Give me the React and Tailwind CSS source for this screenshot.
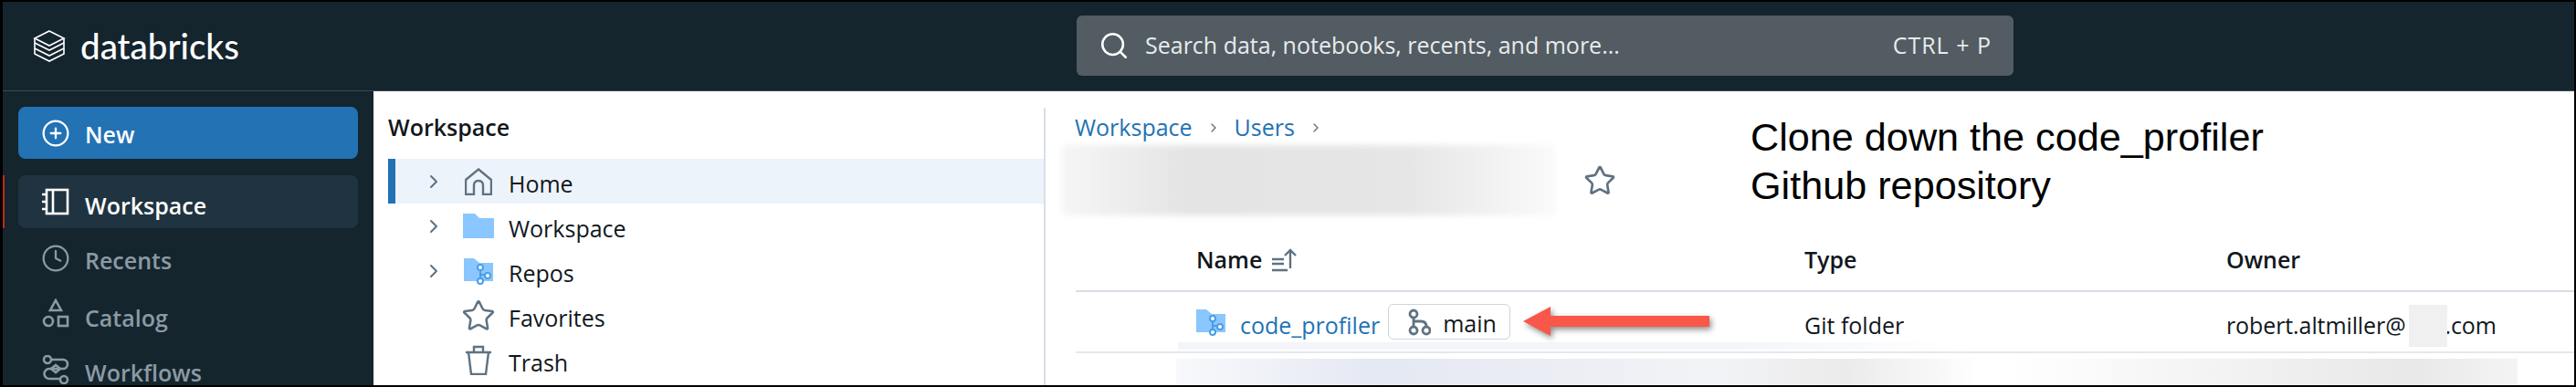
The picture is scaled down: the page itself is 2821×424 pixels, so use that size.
import { ChevronRight, Star, Clock, Search, CirclePlus } from "lucide-react";

const FONT = "font-['Open_Sans','Noto_Sans',sans-serif]";

function Logo() {
  return (
    <svg width="36" height="38" viewBox="0 0 36 38" fill="none" stroke="#fff" strokeWidth="1.6">
      <path d="M18 2 L34 10 L18 18 L2 10 Z" />
      <path d="M2 10 V15 L18 23 L34 15 V10" />
      <path d="M2 15 V21 L18 29 L34 21 V15" />
      <path d="M2 21 V27 L18 35 L34 27 V21" />
    </svg>
  );
}

function BookIcon() {
  return (
    <svg width="30" height="30" viewBox="0 0 30 30" fill="none" stroke="#fff" strokeWidth="2.6">
      <rect x="5" y="2" width="23" height="26" />
      <path d="M12 2 V28" />
      <path d="M0 7 H5 M0 15 H5 M0 23 H5" />
    </svg>
  );
}

function CatalogIcon() {
  return (
    <svg width="30" height="32" viewBox="0 0 30 32" fill="none" stroke="#8c9aa3" strokeWidth="2.6">
      <path d="M15 2 L21 13 H9 Z" />
      <circle cx="7" cy="25" r="5" />
      <rect x="18" y="20" width="10" height="10" />
    </svg>
  );
}

function WorkflowIcon() {
  return (
    <svg width="30" height="32" viewBox="0 0 30 32" fill="none" stroke="#8c9aa3" strokeWidth="2.6">
      <circle cx="6" cy="5" r="4" />
      <circle cx="24" cy="27" r="4" />
      <path d="M10 5 H23 A5 5 0 0 1 23 15 H8 A5 5 0 0 0 8 26 H20" />
      <path d="M15 11 L20 15 L15 19 L10 15 Z" />
    </svg>
  );
}

function HomeIcon() {
  return (
    <svg width="30" height="30" viewBox="0 0 30 30" fill="none" stroke="#5f7281" strokeWidth="2.4">
      <path d="M15 1.5 L29 13 V29 H20 V19 Q20 14 15 14 Q10 14 10 19 V29 H1 V13 Z" />
    </svg>
  );
}

function TrashIcon() {
  return (
    <svg width="28" height="33" viewBox="0 0 28 33" fill="none" stroke="#5f7281" strokeWidth="2.4">
      <path d="M0 8 H28 M3 8 L6 32 H22 L25 8 M9 8 V2 H19 V8" />
    </svg>
  );
}

function RepoFolder({ w, h }) {
  return (
    <svg width={w} height={h} viewBox="0 0 32 30" fill="none">
      <path d="M0 1 H11 L17 6 H32 V26 H0 Z" fill="#8ac6ff" />
      <g stroke="#4a9de6" strokeWidth="2" fill="#fff">
        <path d="M18 12 V26 M18 19 L25 19" />
        <circle cx="18" cy="11" r="3" />
        <circle cx="18" cy="26" r="3" />
        <circle cx="26" cy="20" r="3" />
      </g>
    </svg>
  );
}

function BranchIcon() {
  return (
    <svg width="25" height="30" viewBox="0 0 25 30" fill="none" stroke="#5f7281" strokeWidth="2.8">
      <circle cx="6" cy="6" r="4" />
      <circle cx="6" cy="24" r="4" />
      <circle cx="20" cy="24" r="4" />
      <path d="M6 10 V20 M6 14 H14 Q20 14 20 20" />
    </svg>
  );
}

function SideItem({ icon, label, active, labelClass }) {
  return (
    <div className={`mx-[17px] h-[58px] shrink-0 rounded-lg flex items-center pl-[25px] gap-[16px] text-[25px] font-semibold ${active ? "bg-[#1f3440] text-white" : "text-[#8c9aa3]"}`}>
      <span className="w-[32px] flex justify-center">{icon}</span>
      <span className={`leading-[24px] ${labelClass}`}>{label}</span>
    </div>
  );
}

function TreeRow({ chevron, icon, label, selected }) {
  return (
    <div className={`h-[49px] flex items-center text-[25px] text-[#11171c] border-l-[8px] ${selected ? "bg-[#edf3fa] border-[#2272b4]" : "border-transparent"}`}>
      <span className="w-[41px] ml-[30px] text-[#5f7281]">{chevron && <ChevronRight size={24} />}</span>
      <span className="w-[40px] flex justify-center">{icon}</span>
      <span className="ml-[13px] pt-[7px]">{label}</span>
    </div>
  );
}

export default function App() {
  return (
    <div className={`w-[2821px] h-[424px] bg-black pl-[3px] pr-[2px] py-[2px] overflow-hidden ${FONT}`}>
      <div className="h-[420px] bg-white flex flex-col overflow-hidden">
        <header className="h-[98px] shrink-0 bg-[#14252e] border-b border-[#3b4a53] flex items-center">
          <div className="w-[1176px] flex items-center pl-[33px] gap-[16px]">
            <Logo />
            <span className="text-white text-[38.5px] font-['Lato',sans-serif] font-medium leading-none">databricks</span>
          </div>
          <div className="w-[1026px] h-[66px] -mt-[1px] rounded-md bg-[#525c62] flex items-center text-[#e8ebec] text-[25px] pl-[24px] pr-[24px]">
            <Search size={34} strokeWidth={1.8} className="text-white" />
            <span className="ml-[17px]">Search data, notebooks, recents, and more...</span>
            <span className="ml-auto tracking-[1px]">CTRL + P</span>
          </div>
        </header>

        <div className="flex-1 flex min-h-0">
          <aside className="w-[406px] shrink-0 bg-[#14252e] pt-[17px] flex flex-col overflow-hidden">
            <div className="mx-[17px] h-[57px] shrink-0 rounded-lg bg-[#2272b4] text-white font-semibold text-[25px] flex items-center pl-[25px] gap-[16px]">
              <span className="w-[32px] flex justify-center"><CirclePlus size={38} strokeWidth={1.7} /></span>
              <span className="pt-[4px]">New</span>
            </div>
            <div className="h-[18px] shrink-0" />
            <div className="relative shrink-0">
              <span className="absolute left-0 top-0 w-[2px] h-[58px] bg-[#c5281c]" />
              <SideItem active icon={<BookIcon />} label="Workspace" labelClass="pt-[8px]" />
            </div>
            <div className="h-[4px] shrink-0" />
            <SideItem icon={<Clock size={38} strokeWidth={1.7} />} label="Recents" labelClass="pt-[4px]" />
            <div className="h-[2px] shrink-0" />
            <SideItem icon={<CatalogIcon />} label="Catalog" labelClass="pt-[10px]" />
            <div className="h-[4px] shrink-0" />
            <SideItem icon={<WorkflowIcon />} label="Workflows" labelClass="pt-[6px]" />
          </aside>

          <section className="w-[736px] shrink-0 pl-[16px] pt-[18px]">
            <div className="border-r-2 border-[#d8dfe6] h-full">
              <h2 className="text-[25px] font-semibold text-[#11171c] h-[56px] pb-[12px] flex items-center">Workspace</h2>
              <TreeRow selected chevron icon={<HomeIcon />} label="Home" />
              <TreeRow chevron icon={<svg width="34" height="28" viewBox="0 0 34 28"><path d="M0 0 H13 L18 5 H34 V27 H0 Z" fill="#8ac6ff" /></svg>} label="Workspace" />
              <TreeRow chevron icon={<RepoFolder w={34} h={30} />} label="Repos" />
              <TreeRow icon={<Star size={38} strokeWidth={1.6} className="text-[#5f7281]" />} label="Favorites" />
              <TreeRow icon={<TrashIcon />} label="Trash" />
            </div>
          </section>

          <main className="flex-1 min-w-0 relative pt-[26px]">
            <div className="flex items-center text-[25px] text-[#2272b4] pl-[32px] h-[28px] gap-[15px]">
              <span>Workspace</span>
              <ChevronRight size={16} className="text-[#5f7281]" />
              <span>Users</span>
              <ChevronRight size={16} className="text-[#5f7281]" />
            </div>
            <div className="flex items-center h-[77px] mt-[5px] pl-[18px]">
              <div className="w-[540px] h-[77px] bg-[linear-gradient(90deg,#f6f6f6,#e4e4e4_25%,#e6e6e6_70%,#fafafa)] blur-[3px]" />
              <Star size={36} strokeWidth={1.8} className="ml-[31px] text-[#5f7281]" />
            </div>
            <div className="h-[84px] pt-[16px] border-b-2 border-[#d8dfe6] ml-[33px] flex items-center text-[25px] font-semibold text-[#11171c]">
              <div className="w-[798px] pl-[132px] flex items-center gap-[10px]">
                Name
                <svg width="28" height="26" viewBox="0 0 28 26" fill="none" stroke="#5f7281" strokeWidth="2.4">
                  <path d="M1 12 H14 M1 17 H14 M1 24 H18 M21 22 V2 M15 8 L21 2 L27 8" />
                </svg>
              </div>
              <div className="w-[462px]">Type</div>
              <div>Owner</div>
            </div>
            <div className="h-[67px] border-b-2 border-[#e4e8ec] ml-[33px] flex items-center text-[25px] text-[#11171c] relative">
              <span className="absolute left-[112px] top-[55px] w-[860px] h-[8px] bg-[linear-gradient(90deg,#f3f5fa,#f3f5fa_70%,#ffffff)]" />
              <div className="w-[798px] pl-[132px] flex items-center relative">
                <RepoFolder w={32} h={30} />
                <span className="ml-[16px] pt-[8px] text-[#2272b4]">code_profiler</span>
                <span className="ml-[9px] w-[134px] h-[39px] bg-white border border-[#cbd5dd] rounded-md flex items-center pl-[21px] gap-[13px]">
                  <BranchIcon />
                  <span className="pt-[4px]">main</span>
                </span>
              </div>
              <div className="w-[462px] pt-[8px] relative">Git folder</div>
              <div className="pt-[8px] tracking-[-0.1px]">robert.altmiller@<span className="inline-block w-[43px]" />.com</div>
              <span className="absolute left-[1460px] top-[14px] w-[42px] h-[46px] bg-[#f0f0f0]" />
            </div>
            <div className="h-[29px] mt-[6px] ml-[143px] mr-[62px] bg-[linear-gradient(90deg,#f8f9fc,#e4e8f2_15%,#f2f3f6_40%,#ebebeb_50%,#ffffff_60%,#ffffff_62%,#e8e8e8_92%,#f4f4f4)]" />

            <div className="absolute left-[772px] top-[24px] text-[43.2px] leading-[53px] text-black font-['Liberation_Sans',sans-serif]">
              <div>Clone down the code_profiler</div>
              <div>Github repository</div>
            </div>

            {/* red arrow pointing at the branch badge */}
            <svg className="absolute left-[521px] top-[234px] drop-shadow-[2px_3px_3px_rgba(0,0,0,0.45)]" width="220" height="50" viewBox="0 0 220 50">
              <path d="M2 18 L32 2 L32 12 L206 12 L206 24 L32 24 L32 34 Z" fill="#f9574a" />
            </svg>
          </main>
        </div>
      </div>
    </div>
  );
}
